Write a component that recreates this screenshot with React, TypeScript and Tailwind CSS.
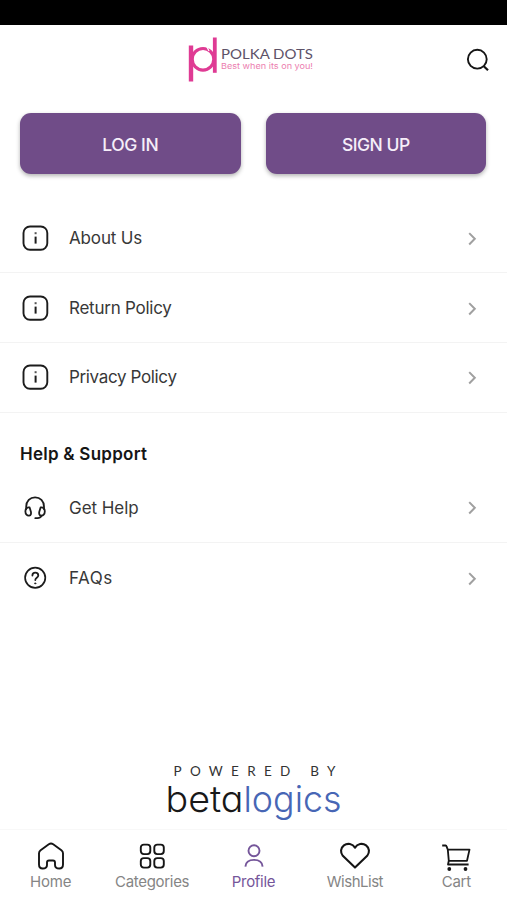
import type { ReactNode } from "react";

function InfoIcon() {
  return (
    <svg width="30" height="30" viewBox="0 0 30 30" fill="none" stroke="#1c1c1c" strokeWidth="1.9">
      <rect x="3.5" y="3.5" width="23.8" height="23.3" rx="6.5" />
      <path d="M15.6 13.6v7" strokeWidth="2" />
      <path d="M15.6 9.2v2" strokeWidth="2" stroke="#555" />
    </svg>
  );
}

function HeadsetIcon() {
  return (
    <svg width="30" height="30" viewBox="0 0 30 30" fill="none" stroke="#1c1c1c" strokeWidth="1.8" strokeLinecap="round" strokeLinejoin="round">
      <path d="M6.2 17V14.6C6.2 9.2 10 5.3 15.1 5.3S24 9.2 24 14.6V17" />
      <path d="M9.6 15.4C6.8 15 5.4 16.8 5.4 19.4s1.7 4.6 3.8 4.2c1.7-.3 2.1-1.8 1.7-3.9Z" />
      <path d="M20.6 15.4c2.8-.4 4.2 1.4 4.2 4s-1.7 4.6-3.8 4.2c-1.7-.3-2.1-1.8-1.7-3.9Z" />
      <path d="M21.5 23.8c-.7 1.7-2.3 2.4-6.2 2.4" />
    </svg>
  );
}

function QuestionIcon() {
  return (
    <svg width="30" height="30" viewBox="0 0 30 30" fill="none" stroke="#1c1c1c" strokeWidth="1.7" strokeLinecap="round">
      <circle cx="15.2" cy="14.8" r="10.1" />
      <path d="M12.4 12.5c0-1.8 1.2-2.8 2.9-2.8s3 1.1 3 2.7c0 2.3-3 2.5-3 4.6" strokeWidth="1.8" />
      <circle cx="15.2" cy="20.4" r=".7" fill="#1c1c1c" strokeWidth=".6" />
    </svg>
  );
}

function Row({ icon, label, spacing, divider = true }: { icon: ReactNode; label: string; spacing: string; divider?: boolean }) {
  return (
    <div className={`flex h-[69.7px] items-center pr-[29px] pl-5 ${divider ? "border-b border-[#f3f3f3]" : ""}`}>
      {icon}
      <span className={`ml-[19px] flex-1 pt-[2px] text-[17px] text-[#383838] ${spacing}`}>{label}</span>
      <svg width="12" height="16" viewBox="0 0 12 16" fill="none" stroke="#a0a0a0" strokeWidth="2">
        <path d="M3.2 3.1 8.8 8.8 3.2 14.5" />
      </svg>
    </div>
  );
}

function NavItem({ icon, label, active = false, spacing }: { icon: ReactNode; label: string; active?: boolean; spacing: string }) {
  return (
    <div className="flex flex-1 flex-col items-center pt-[10px]">
      {icon}
      <span className={`text-[15px] leading-5 ${spacing} ${active ? "text-[#75569a]" : "text-[#858585]"}`}>{label}</span>
    </div>
  );
}

const navSvg = {
  width: 32,
  height: 32,
  viewBox: "0 0 32 32",
  fill: "none",
  stroke: "#151515",
  strokeWidth: 1.9,
  strokeLinejoin: "round" as const,
};

export default function App() {
  return (
    <div className="flex h-[900px] w-full flex-col overflow-hidden bg-white font-['Inter',sans-serif]">
      <div className="h-[25px] shrink-0 bg-black" />
      <header className="flex h-[88px] shrink-0 items-start justify-between pr-[16px] pl-[186px] pt-[10px]">
        <svg width="130" height="52" viewBox="0 0 130 52">
          <g fill="none" stroke="#df3b94">
            <path d="M5 10.5v36" strokeWidth="4.4" />
            <path d="M28.8 2.5v35.3" strokeWidth="3.8" />
            <circle cx="17" cy="24.3" r="10.8" strokeWidth="3.2" />
          </g>
          <path d="m20.5 11 2.5 5" stroke="#fff" strokeWidth="1.2" />
          <text x="35" y="24" textLength="92" lengthAdjust="spacingAndGlyphs" fontFamily="Lato, sans-serif" fontSize="12.5" fill="#5d5268">POLKA DOTS</text>
          <text x="35" y="34.2" textLength="92" lengthAdjust="spacingAndGlyphs" className="[font-feature-settings:'cv11']" fontSize="8.2" fill="#ec7eaf">Best when its on you!</text>
        </svg>
        <svg className="mt-[12px]" width="26" height="26" viewBox="0 0 26 26" fill="none" stroke="#151515" strokeWidth="1.9">
          <circle cx="12.3" cy="12.2" r="9.4" />
          <path d="m18.8 19.2 4.2 4" strokeWidth="2.2" />
        </svg>
      </header>

      <div className="flex h-[61px] shrink-0 gap-[25px] pr-[21px] pl-5">
        <button className="flex-1 rounded-[11px] bg-[#704c88] pt-[3px] text-[17.5px] font-medium tracking-[-0.4px] text-[#f6eef9] shadow-[0_2px_4px_rgba(0,0,0,0.3)]">
          LOG IN
        </button>
        <button className="flex-1 rounded-[11px] bg-[#704c88] pt-[3px] text-[17.5px] font-medium tracking-[-0.5px] text-[#f6eef9] shadow-[0_2px_4px_rgba(0,0,0,0.3)]">
          SIGN UP
        </button>
      </div>

      <main className="flex flex-1 flex-col pt-[29.5px]">
        <Row icon={<InfoIcon />} label="About Us" spacing="tracking-[-0.15px]" />
        <Row icon={<InfoIcon />} label="Return Policy" spacing="tracking-[-0.25px]" />
        <Row icon={<InfoIcon />} label="Privacy Policy" spacing="tracking-[-0.35px]" />
        <h2 className="flex h-[60.5px] items-end pb-[7px] pl-5 text-[17px] leading-[24px] font-semibold tracking-[0.25px] text-[#151515]">Help &amp; Support</h2>
        <Row icon={<HeadsetIcon />} label="Get Help" spacing="tracking-[-0.05px]" />
        <Row icon={<QuestionIcon />} label="FAQs" spacing="tracking-[0.5px]" divider={false} />
      </main>

      <footer className="flex shrink-0 justify-center pb-[4px]">
        <svg width="180" height="65" viewBox="0 0 180 65">
          <text x="9.5" y="15.5" textLength="162" fontFamily="Lato, sans-serif" fontSize="13.5" fill="#333">POWERED BY</text>
          <text x="1.5" y="51.5" textLength="78" lengthAdjust="spacingAndGlyphs" className="font-light [font-feature-settings:'cv11']" fontSize="36" fill="#181818">beta</text>
          <text x="79.5" y="51.5" textLength="98" lengthAdjust="spacingAndGlyphs" className="font-light [font-feature-settings:'cv11']" fontSize="36" fill="#4766b5">logics</text>
        </svg>
      </footer>

      <nav className="flex h-[71px] shrink-0 border-t border-[#f8f8f8]">
        <NavItem label="Home" spacing="tracking-[-0.2px]" icon={
          <svg {...navSvg}>
            <path d="M13.8 4.2 5.6 10.2Q4 11.5 4 13.3v11.2Q4 28.5 7.7 28.5 12 28.5 12 25v-2.4Q12 20.5 14 20.5h4q2 0 2 2.1V25q0 3.5 4.3 3.5Q28 28.5 28 24.5V13.3q0-1.8-1.6-3.1L18.2 4.2Q16 2.8 13.8 4.2Z" />
          </svg>
        } />
        <NavItem label="Categories" spacing="tracking-[-0.3px]" icon={
          <svg {...navSvg}>
            <rect x="4.8" y="4.6" width="9.5" height="9.5" rx="3" />
            <rect x="18.3" y="4.6" width="9.5" height="9.5" rx="3" />
            <rect x="4.8" y="18.1" width="9.5" height="9.5" rx="3" />
            <rect x="18.3" y="18.1" width="9.5" height="9.5" rx="3" />
          </svg>
        } />
        <NavItem label="Profile" active spacing="tracking-[-0.3px]" icon={
          <svg {...navSvg} stroke="#75569a">
            <circle cx="16" cy="10.7" r="5.5" />
            <path d="M7.4 26.6c.3-4.2 3.5-6.7 8.6-6.7s8.3 2.5 8.6 6.7" />
          </svg>
        } />
        <NavItem label="WishList" spacing="tracking-[-0.5px]" icon={
          <svg {...navSvg} strokeWidth={2.1}>
            <path d="M16 7.6C13.6 3.7 8.6 2.6 4.9 5.4 1.4 8.1 1.2 12.6 3.8 15.8L16 27.6 28.2 15.8c2.6-3.2 2.4-7.7-1.1-10.4C23.4 2.6 18.4 3.7 16 7.6Z" />
          </svg>
        } />
        <NavItem label="Cart" spacing="tracking-[-0.3px]" icon={
          <svg {...navSvg} strokeWidth={1.8}>
            <path d="M2.2 5.5h3.4q.8 0 .9.8L7.8 9.6 8.8 20.8M7.8 9.6h21.7L27 20.8H8.8L8 24.5h20.6" />
            <circle cx="9.3" cy="29" r="1.9" fill="#151515" stroke="none" />
            <circle cx="25.5" cy="29" r="1.9" fill="#151515" stroke="none" />
          </svg>
        } />
      </nav>
    </div>
  );
}
